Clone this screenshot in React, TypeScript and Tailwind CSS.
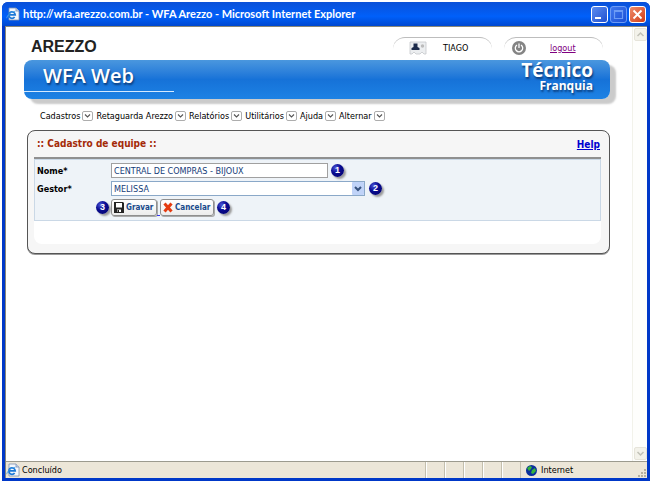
import React from "react";

const uiFont = "font-['DejaVu_Sans_Condensed','DejaVu_Sans',sans-serif]";

function IePageIcon() {
  return (
    <svg viewBox="0 0 14 14" className="size-3.5 shrink-0" aria-hidden="true">
      <path d="M3 1h7l3 3v9H3z" fill="#f4f7fc" stroke="#7d8fb0" strokeWidth="0.8" />
      <path d="M10 1v3h3" fill="#c9d6ea" stroke="#7d8fb0" strokeWidth="0.8" />
      <path d="M8.6 10a3.2 3.2 0 1 1 .6-2.2H3" fill="none" stroke="#1c78d6" strokeWidth="1.7" />
      <path d="M0.7 11.2C1 8.500 5 4.600 9.400 4.300" fill="none" stroke="#4ba3ea" strokeWidth="0.9" />
    </svg>
  );
}

function ChevronBox() {
  return (
    <svg viewBox="0 0 11 10" className="h-2.5 w-[11px] shrink-0" aria-hidden="true">
      <rect x="0.5" y="0.5" width="10" height="9" rx="1.5" fill="#fff" stroke="#adadad" />
      <path d="M3 3.500l2.500 2.500L8 3.500" fill="none" stroke="#555" strokeWidth="1.100" />
    </svg>
  );
}

function Badge({ n }: { n: number }) {
  return (
    <span className="flex size-[13px] shrink-0 items-center justify-center rounded-full bg-[radial-gradient(circle_at_35%_30%,#4a55d8,#0a0c92_40%,#000066)] font-['Liberation_Sans',sans-serif] text-[9px] leading-none font-bold text-white shadow-[2px_2px_2px_#9a9a9a]">
      {n}
    </span>
  );
}

function TitleBar() {
  const control = "flex h-[17px] w-[17px] items-center justify-center rounded-[3px] border border-white";
  return (
    <header className="flex h-6 shrink-0 items-center gap-[3px] bg-linear-to-b from-[#0a50d8] via-[#0060fa] via-60% to-[#0048d0] pr-1 pl-1">
      <IePageIcon />
      <h1 className="flex-1 truncate font-['Lato',sans-serif] text-[11px] leading-4 font-bold text-white">
        http://wfa.arezzo.com.br - WFA Arezzo - Microsoft Internet Explorer
      </h1>
      <div className="flex gap-0.5">
        <button aria-label="Minimizar" className={`${control} bg-linear-to-br from-[#5d8cf0] to-[#2150d0]`}>
          <svg viewBox="0 0 15 15" className="size-[15px]"><path d="M3 11h6" stroke="#fff" strokeWidth="2" /></svg>
        </button>
        <button aria-label="Maximizar" className="flex h-[17px] w-[17px] items-center justify-center rounded-[3px] border border-[#6d9bf5] bg-linear-to-br from-[#3e76ee] to-[#1d50d6]">
          <svg viewBox="0 0 15 15" className="size-[15px]"><path d="M3.500 3.500h8v8h-8zM3 4.500h9" fill="none" stroke="#6d9bf5" strokeWidth="1.200" /></svg>
        </button>
        <button aria-label="Fechar" className={`${control} bg-linear-to-br from-[#ee8a68] to-[#d03a10]`}>
          <svg viewBox="0 0 15 15" className="size-[15px]"><path d="M3.500 3.500l8 8M11.500 3.500l-8 8" stroke="#fff" strokeWidth="1.900" /></svg>
        </button>
      </div>
    </header>
  );
}

function PageHeader() {
  const tab = "flex h-[21px] w-[99px] items-center rounded-t-xl border-t border-[#bdbdbd] text-[9px] leading-4 text-black bg-[linear-gradient(#ccc,#fff)_left/1px_100%_no-repeat,linear-gradient(#ccc,#fff)_right/1px_100%_no-repeat]";
  return (
    <div className="flex items-end pr-[7px] pl-[7px]">
      <div className="flex-1 pb-[3px] font-['Liberation_Sans',Arial,sans-serif] text-base leading-4 font-bold text-[#222]">AREZZO</div>
      <div className="flex gap-3">
        <div className={`${tab} gap-4 pl-4`}>
          <svg viewBox="0 0 18 14" className="h-3.5 w-[18px]" aria-hidden="true">
            <path d="M1 1h16v12h-2l-2-2-2 2H7l-2-2-2 2H1z" fill="#eceef0" stroke="#c5c7ca" strokeWidth="0.800" />
            <path d="M4.500 2.500h4v3.500l2 1v2H2.500V7l2-1z" fill="#1c2a4a" />
            <circle cx="13.500" cy="5" r="1.700" fill="#bbb" />
          </svg>
          TIAGO
        </div>
        <div className={`${tab} gap-6 pl-2`}>
          <svg viewBox="0 0 14 14" className="size-3.5" aria-hidden="true">
            <circle cx="7" cy="7" r="7" fill="#848484" />
            <path d="M5 4a3.700 3.700 0 1 0 4 0M7 2.500v4.500" fill="none" stroke="#fff" strokeWidth="1.300" />
          </svg>
          <a href="#logout" className="text-[#800080] underline">logout</a>
        </div>
      </div>
    </div>
  );
}

function Banner() {
  return (
    <div className="flex h-[39px] items-start justify-between rounded-lg bg-linear-to-b from-[#4a97de] via-[#1672d8] via-50% to-[#1d82e4] pr-[17px] font-['Open_Sans',sans-serif] font-bold text-white shadow-[6px_5px_2px_#cbcbcb] [text-shadow:1px_2px_2px_#0b3d7c]">
      <div className="flex h-8 w-[150px] items-center border-b border-[#d5eaff] pl-[19px] text-[20px] leading-6 font-semibold">WFA Web</div>
      <div className="flex flex-col items-end">
        <div className="text-[19px] leading-5">Técnico</div>
        <div className="text-[12px] leading-3">Franquia</div>
      </div>
    </div>
  );
}

function Menu() {
  const items = ["Cadastros", "Retaguarda Arezzo", "Relatórios", "Utilitários", "Ajuda", "Alternar"];
  return (
    <nav className="flex gap-[3px] pt-[11px] pb-2 pl-4">
      {items.map((item) => (
        <button key={item} className="flex items-center gap-0.5 whitespace-nowrap text-[9px] leading-3 text-black">
          {item}
          <ChevronBox />
        </button>
      ))}
    </nav>
  );
}

function TeamForm() {
  const label = "w-[74px] shrink-0 text-[9px] leading-[14px] font-bold text-black";
  const button =
    "flex h-[17px] items-center gap-0.5 rounded-[3px] border border-[#8f8f8f] bg-linear-to-b from-white to-[#ececec] px-0.5 text-[8px] leading-3 font-bold text-[#174a8c] shadow-[1px_1px_0_#aaa]";
  return (
    <section className="ml-[3px] rounded-lg border border-[#555] bg-[#f6f6f6] pr-2 pb-[9px] pl-1.5 shadow-[0_1px_0_#999]">
      <div className="flex h-7 items-center justify-between border-b-2 border-[#909090] pr-px pl-[3px] font-bold">
        <h2 className="text-[10px] leading-4 text-[#a42a08]">:: Cadastro de equipe ::</h2>
        <a href="#help" className="text-[10px] text-[#0000d0] underline">Help</a>
      </div>
      <form className="flex flex-col gap-[3px] border border-[#cad8e6] bg-[#eef3f8] pt-[3px] pb-1 pl-0.5" onSubmit={(e) => e.preventDefault()}>
        <div className="flex items-center">
          <label htmlFor="nome" className={label}>Nome*</label>
          <input id="nome" defaultValue="CENTRAL DE COMPRAS - BIJOUX" className="mr-[3px] h-[15px] w-[217px] border border-[#a0a0a0] bg-white px-0.5 text-[9px] leading-3 text-[#143c78]" />
          <Badge n={1} />
        </div>
        <div className="flex items-center">
          <label htmlFor="gestor" className={label}>Gestor*</label>
          <div className="relative mr-1 h-[15px] w-[254px]">
            <select id="gestor" defaultValue="MELISSA" className="block h-[15px] w-full appearance-none border border-[#8aa8c8] bg-white px-0.5 text-[9px] leading-3 text-[#143c78]">
              <option>MELISSA</option>
            </select>
            <svg viewBox="0 0 12 13" className="pointer-events-none absolute top-px right-px h-[13px] w-3" aria-hidden="true">
              <rect width="12" height="13" rx="1" fill="#c0d3f8" />
              <path d="M3 5l3 3 3-3" fill="none" stroke="#36527e" strokeWidth="2" />
            </svg>
          </div>
          <Badge n={2} />
        </div>
        <div className="flex items-center pl-[59px]">
          <Badge n={3} />
          <button type="submit" className={`${button} ml-0.5 w-[46px]`}>
            <svg viewBox="0 0 10 11" className="h-[11px] w-2.5 shrink-0" aria-hidden="true">
              <path d="M0 0h9l1 1v10H0z" fill="#242424" />
              <path d="M2 1h6v4.500H2zM3 7.500h4V10H3z" fill="#fff" />
              <path d="M3.500 8h1.500v2H3.500z" fill="#242424" />
            </svg>
            Gravar
          </button>
          <span className="h-px w-[3px] self-end bg-[#3636ee]" />
          <button type="button" className={`${button} mr-[3px] w-[54px]`}>
            <svg viewBox="0 0 10 11" className="h-[11px] w-2.5 shrink-0" aria-hidden="true">
              <path d="M1.500 1.500l7 8M8.500 1.500l-7 8" stroke="#e53b10" strokeWidth="3" />
            </svg>
            Cancelar
          </button>
          <Badge n={4} />
        </div>
      </form>
      <div className="h-[23px] rounded-b-lg bg-white" />
    </section>
  );
}

function ScrollBar() {
  const arrow = "flex size-[13px] items-center justify-center rounded-xs border border-[#e6e4da] bg-[#f3f2ea]";
  return (
    <div className="flex w-[15px] shrink-0 flex-col items-center justify-between border-l border-[#f2f2ea] bg-[#fefefc] py-px">
      <button aria-label="Rolar para cima" className={arrow}>
        <svg viewBox="0 0 9 9" className="size-[9px]"><path d="M1.500 6l3-3 3 3" fill="none" stroke="#c1c1b7" strokeWidth="1.500" /></svg>
      </button>
      <button aria-label="Rolar para baixo" className={arrow}>
        <svg viewBox="0 0 9 9" className="size-[9px]"><path d="M1.500 3l3 3 3-3" fill="none" stroke="#c1c1b7" strokeWidth="1.500" /></svg>
      </button>
    </div>
  );
}

function StatusBar() {
  const cell = "w-[19px] border-l border-[#c4bfae] shadow-[inset_1px_0_0_#fff]";
  return (
    <footer className="flex h-[17px] shrink-0 items-stretch border-t border-[#9c9a8e] bg-[#ece6d8] text-[9px] leading-4 text-black">
      <div className="flex flex-1 items-center gap-0.5"><IePageIcon />Concluído</div>
      <div className={cell} /><div className={cell} /><div className={cell} /><div className={cell} /><div className={cell} />
      <div className="flex w-[127px] items-center gap-1 border-l border-[#c4bfae] pl-[5px]">
        <svg viewBox="0 0 11 11" className="size-[11px]" aria-hidden="true">
          <circle cx="5.500" cy="5.500" r="5.500" fill="#0a2f9c" />
          <path d="M1 3l3-2 2 1-1 2-2 2zM6 5l3-2 1 3-3 3-2-1z" fill="#35b53b" />
        </svg>
        Internet
        <svg viewBox="0 0 10 10" className="mt-auto ml-auto size-2.5" aria-hidden="true">
          <path d="M7 1h2v2H7zM4 4h2v2H4zM7 4h2v2H7zM1 7h2v2H1zM4 7h2v2H4zM7 7h2v2H7z" fill="#b5b09f" />
        </svg>
      </div>
    </footer>
  );
}

export default function App() {
  return (
    <div className={`h-screen bg-white pt-0.5 pr-1 pb-0.5 pl-0.5 ${uiFont}`}>
      <div className="flex h-full flex-col overflow-hidden rounded-t-md bg-[#0038c8]">
        <TitleBar />
        <div className="mr-[3px] mb-[3px] ml-[3px] flex min-h-0 flex-1 flex-col border-t border-l border-[#8a8878] bg-white">
          <div className="flex min-h-0 flex-1">
            <main className="min-w-0 flex-1 pt-2.5 pr-[22px] pl-[18px]">
              <PageHeader />
              <div className="pt-0.5"><Banner /></div>
              <Menu />
              <TeamForm />
            </main>
            <ScrollBar />
          </div>
          <StatusBar />
        </div>
      </div>
    </div>
  );
}
